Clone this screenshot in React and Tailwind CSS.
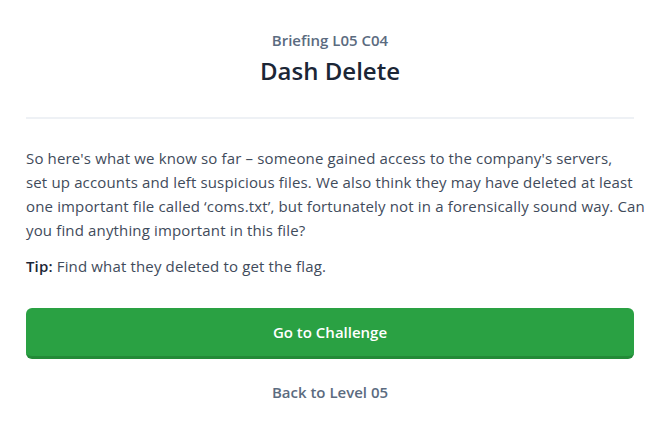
export default function App() {
  return (
    <div
      className="min-h-[430px] bg-white pl-[26px] pr-[22px] pt-[30px] text-[#3f4b5b]"
      style={{ fontFamily: "'Open Sans', Lato, sans-serif" }}
    >
      <div className="text-center">
        <div className="text-[15px] font-semibold leading-5 text-[#5b6b7f]">Briefing L05 C04</div>
        <h1 className="mt-[5px] text-[24px] font-semibold leading-8 text-[#1b2636]">Dash Delete</h1>
      </div>
      <hr className="mt-[30px] border-t-2 border-[#eef1f5]" />
      {/* line breaks kept as in the reference */}
      <p className="mt-[27px] whitespace-nowrap text-[15px] leading-[24px] tracking-[0.15px]">
        So here's what we know so far – someone gained access to the company's servers,
        <br />
        set up accounts and left suspicious files. We also think they may have deleted at least
        <br />
        one important file called ‘coms.txt’, but fortunately not in a forensically sound way. Can
        <br />
        you find anything important in this file?
      </p>
      <p className="mt-[12px] text-[15px] leading-[24px] tracking-[0.15px]">
        <span className="font-semibold text-[#1b2636]">Tip:</span> Find what they deleted to get the flag.
      </p>
      <button className="mt-[30px] h-[51px] w-full rounded-md border-b-[3px] border-[#238a37] bg-[#2aa143] text-[15px] font-semibold text-white">
        Go to Challenge
      </button>
      <div className="mt-[22px] text-center text-[15px] font-semibold text-[#5b6b7f]">Back to Level 05</div>
    </div>
  );
}
